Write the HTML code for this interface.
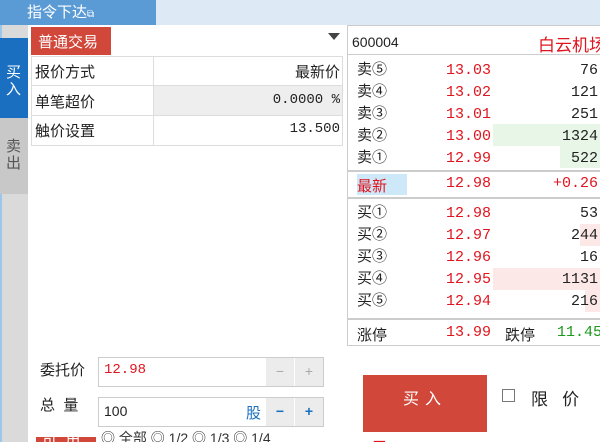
<!DOCTYPE html><html><head><meta charset="utf-8"><style>
*{margin:0;padding:0;box-sizing:border-box}
html{width:600px;height:442px;overflow:hidden}
body{width:600px;height:442px;overflow:hidden;background:#fff;font-family:"Liberation Sans","Noto Sans CJK SC",sans-serif;font-size:14px;color:#222;position:relative}
.a{position:absolute}
.r{color:#e0141e}
.mono{font-family:"Liberation Mono","Noto Sans CJK SC",monospace}
</style></head><body>
<div class="a" style="left:0;top:0;width:600px;height:25px;background:#dde9f5"></div>
<div class="a" style="left:0;top:0;width:156px;height:25px;background:#5a9bd6;color:#fff;font-size:15px;padding:1px 0 0 27px">指令下达<span style="font-size:10px">⧉</span></div>
<div class="a" style="left:0;top:25px;width:28px;height:417px;background:#dadada;border-left:2px solid #9cc6ea"></div>
<div class="a" style="left:0;top:38px;width:28px;height:80px;background:#1a6fc0;color:#fff;font-size:15px;line-height:17px;padding:26px 0 0 6px">买<br>入</div>
<div class="a" style="left:0;top:118px;width:28px;height:76px;background:#c8c8c8;color:#555;font-size:15px;line-height:17px;padding:20px 0 0 6px">卖<br>出</div>
<div class="a" style="left:28px;top:25px;width:318px;height:417px;background:#fff"></div>
<div class="a" style="left:31px;top:27px;width:80px;height:28px;background:#d1473a;color:#fff;font-size:15px;padding:4px 0 0 7px">普通交易</div>
<div class="a" style="left:328px;top:33px;width:0;height:0;border-left:6px solid transparent;border-right:6px solid transparent;border-top:7px solid #444"></div>
<div class="a" style="left:31px;top:56px;width:312px;height:90px;border:1px solid #ddd"></div>
<div class="a" style="left:153px;top:57px;width:1px;height:88px;background:#ddd"></div>
<div class="a" style="left:32px;top:85px;width:310px;height:1px;background:#ddd"></div>
<div class="a" style="left:32px;top:115px;width:310px;height:1px;background:#ddd"></div>
<div class="a" style="left:154px;top:86px;width:188px;height:29px;background:#eee"></div>
<div class="a" style="left:35px;top:61px;font-size:15px">报价方式</div>
<div class="a" style="left:35px;top:91px;font-size:15px">单笔超价</div>
<div class="a" style="left:35px;top:120px;font-size:15px">触价设置</div>
<div class="a" style="right:260px;top:61px;font-size:15px">最新价</div>
<div class="a mono" style="right:260px;top:92px">0.0000 %</div>
<div class="a mono" style="right:260px;top:121px">13.500</div>

<div class="a" style="left:347px;top:25px;width:260px;height:321px;border:1px solid #ccc;background:#fff"></div>
<div class="a" style="left:348px;top:54px;width:252px;height:1px;background:#ccc"></div>
<div class="a" style="left:348px;top:170px;width:252px;height:2px;background:#ccc"></div>
<div class="a" style="left:348px;top:197px;width:252px;height:2px;background:#ccc"></div>
<div class="a" style="left:348px;top:318px;width:252px;height:2px;background:#ccc"></div>
<div class="a" style="left:352px;top:34px;font-size:14px">600004</div>
<div class="a r" style="left:538px;top:31px;font-size:17px;white-space:nowrap">白云机场</div>
<div class="a" style="left:493px;top:124px;width:107px;height:22px;background:#e8f6e8"></div>
<div class="a" style="left:560px;top:146px;width:40px;height:22px;background:#e8f6e8"></div>
<div class="a" style="left:580px;top:224px;width:20px;height:22px;background:#fde8e8"></div>
<div class="a" style="left:493px;top:268px;width:107px;height:22px;background:#fde8e8"></div>
<div class="a" style="left:585px;top:290px;width:15px;height:22px;background:#fde8e8"></div>
<div class="a" style="left:357px;top:174px;width:50px;height:21px;background:#cde8f8"></div>
<div class="a mono" style="left:0;top:0;width:600px;font-size:15px">
<div class="a" style="left:357px;top:60px;line-height:22px">卖⑤<br>卖④<br>卖③<br>卖②<br>卖①</div>
<div class="a r" style="left:446px;top:60px;line-height:22px">13.03<br>13.02<br>13.01<br>13.00<br>12.99</div>
<div class="a" style="right:2px;top:60px;line-height:22px;text-align:right">76<br>121<br>251<br>1324<br>522</div>
<div class="a r" style="left:357px;top:175px">最新</div>
<div class="a r" style="left:446px;top:175px">12.98</div>
<div class="a r" style="right:2px;top:175px">+0.26</div>
<div class="a" style="left:357px;top:203px;line-height:22px">买①<br>买②<br>买③<br>买④<br>买⑤</div>
<div class="a r" style="left:446px;top:203px;line-height:22px">12.98<br>12.97<br>12.96<br>12.95<br>12.94</div>
<div class="a" style="right:2px;top:203px;line-height:22px;text-align:right">53<br>244<br>16<br>1131<br>216</div>
<div class="a" style="left:357px;top:324px">涨停</div>
<div class="a r" style="left:446px;top:324px">13.99</div>
<div class="a" style="left:505px;top:324px">跌停</div>
<div class="a" style="left:557px;top:324px;color:#1a9a1a">11.45</div>
</div>

<div class="a" style="left:40px;top:359px;font-size:15px">委托价</div>
<div class="a" style="left:40px;top:394px;font-size:15px">总&nbsp;&nbsp;量</div>
<div class="a" style="left:98px;top:357px;width:226px;height:30px;border:1px solid #ccc"></div>
<div class="a r mono" style="left:104px;top:362px;font-size:14px">12.98</div>
<div class="a" style="left:266px;top:358px;width:28px;height:28px;background:#ececec;color:#aaa;text-align:center;line-height:26px">−</div>
<div class="a" style="left:295px;top:358px;width:28px;height:28px;background:#ececec;color:#aaa;text-align:center;line-height:26px">+</div>
<div class="a" style="left:98px;top:397px;width:226px;height:30px;border:1px solid #ccc"></div>
<div class="a" style="left:104px;top:403px;font-size:14px">100</div>
<div class="a" style="left:246px;top:402px;font-size:15px;color:#1a6fc0">股</div>
<div class="a" style="left:266px;top:398px;width:28px;height:28px;background:#ececec;color:#1a6fc0;text-align:center;line-height:26px;font-weight:bold">−</div>
<div class="a" style="left:295px;top:398px;width:28px;height:28px;background:#ececec;color:#1a6fc0;text-align:center;line-height:26px;font-weight:bold">+</div>
<div class="a" style="left:36px;top:437px;width:60px;height:5px;background:#d1473a"></div>
<div class="a" style="left:42px;top:430px;font-size:15px;color:#fff;height:12px;overflow:hidden;clip-path:inset(7px 0 0 0)">可&nbsp;&nbsp;用</div>
<div class="a" style="left:101px;top:428px;font-size:14px;white-space:nowrap;color:#333">◎ 全部 ◎ 1/2 ◎ 1/3 ◎ 1/4</div>
<div class="a" style="left:363px;top:375px;width:124px;height:57px;background:#d1473a;color:#fff;font-size:16px;text-align:center;line-height:50px;letter-spacing:6px">买入</div>
<div class="a" style="left:502px;top:389px;width:13px;height:13px;border:1px solid #777"></div>
<div class="a" style="left:531px;top:385px;font-size:17px">限&nbsp;&nbsp;&nbsp;价</div>
<div class="a r" style="left:372px;top:436px;font-size:15px">五</div>
</body></html>
